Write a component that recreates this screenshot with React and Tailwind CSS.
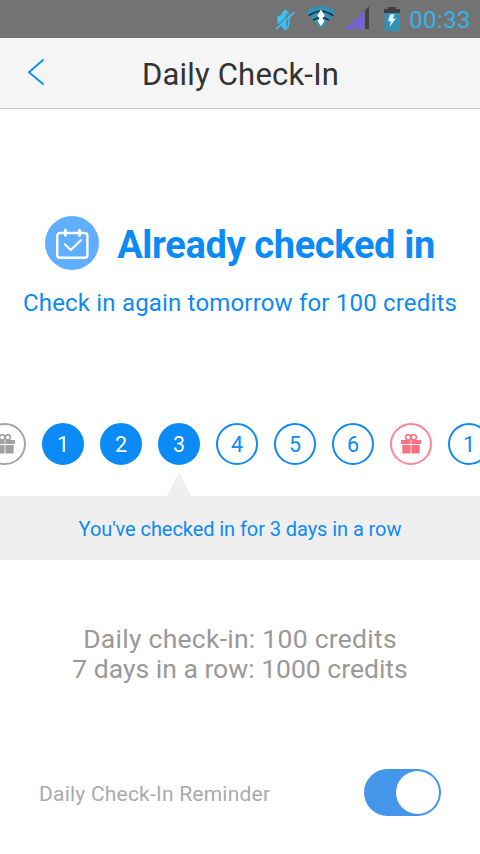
import { useState } from "react";

const days = [
  { type: "gift", state: "past" },
  { label: "1", state: "done" },
  { label: "2", state: "done" },
  { label: "3", state: "done" },
  { label: "4", state: "next" },
  { label: "5", state: "next" },
  { label: "6", state: "next" },
  { type: "gift", state: "reward" },
  { label: "1", state: "next" },
];

const dayStyles = {
  past: "border-[#a6a6a6] text-[#a0a0a0]",
  done: "border-[#0c8af5] bg-[#0c8af5] text-white",
  next: "border-[#0c8af5] text-[#0c8af5]",
  reward: "border-[#ff8591] text-[#ff7080]",
};

function App() {
  const [reminder, setReminder] = useState(true);

  return (
    <div className="flex h-[854px] w-[480px] flex-col overflow-hidden bg-white font-[Roboto,sans-serif]">
      <StatusBar />

      <header className="flex h-[71px] shrink-0 items-center border-b border-[#c6c8c8] bg-[#f5f5f5]">
        <button type="button" aria-label="Back" className="w-[72px] pb-0.5 pl-[27px]">
          <svg width="18" height="28" viewBox="0 0 18 28" fill="none" stroke="#1291f7" strokeWidth="2" strokeLinecap="round">
            <path d="M16 2 2 14.3 16 26" />
          </svg>
        </button>
        <h1 className="flex-1 pt-[3px] pr-[71px] text-center text-[31px] leading-9 tracking-[0.2px] text-[#333]">
          Daily Check-In
        </h1>
      </header>

      <section className="flex flex-col items-center pt-[107px] text-[#0c8af5]">
        <div className="flex h-[54px] items-center gap-[18px]">
          <CalendarBadge />
          <h2 className="pt-1 text-[38px] leading-[46px] font-bold tracking-[-0.35px] whitespace-nowrap">
            Already checked in
          </h2>
        </div>
        <p className="mt-[17px] text-2xl leading-8 tracking-[0.18px] whitespace-nowrap">
          Check in again tomorrow for 100 credits
        </p>
      </section>

      <section className="mt-[104px]">
        <div className="-ml-4 flex gap-4">
          {days.map((day, i) => (
            <Day key={i} {...day} />
          ))}
        </div>
        <svg className="mt-2 ml-[167px] block" width="24" height="23" viewBox="0 0 24 23" fill="#efefef">
          <path d="M0 23 10.8 1.2Q12 -.7 13.2 1.2L24 23z" />
        </svg>
        <p className="h-16 bg-[#efefef] pt-[3px] text-center text-xl leading-[60px] tracking-[-0.07px] text-[#0c8af5]">
          You've checked in for 3 days in a row
        </p>
      </section>

      <section className="mt-16 text-center text-[26.5px] leading-[30px] text-[#999]">
        <p className="tracking-[0.26px]">Daily check-in: 100 credits</p>
        <p>7 days in a row: 1000 credits</p>
      </section>

      <section className="mt-[85px] flex h-[47px] items-center justify-between pr-[39px] pl-[39px]">
        <span className="pt-0.5 text-[21px] leading-7 tracking-[0.22px] text-[#aaa]">Daily Check-In Reminder</span>
        <button
          type="button"
          role="switch"
          aria-checked={reminder}
          aria-label="Daily Check-In Reminder"
          onClick={() => setReminder((v) => !v)}
          className={`flex h-[47px] w-[77px] items-center rounded-full px-0.5 ${
            reminder ? "justify-end bg-[#4496ea]" : "justify-start bg-[#ccc]"
          }`}
        >
          <span className="size-[43px] rounded-full bg-white" />
        </button>
      </section>
    </div>
  );
}

const Day = ({ type, label, state }) => (
  <div
    className={`flex size-[42px] shrink-0 items-center justify-center rounded-full border-2 text-[21.5px] leading-none ${dayStyles[state]}`}
  >
    {type === "gift" ? <GiftIcon /> : <span className="pt-0.5">{label}</span>}
  </div>
);

const GiftIcon = () => (
  <svg className="shrink-0" width="20" height="20" viewBox="0 0 20 20" fill="currentColor">
    <path d="M0 6h9.600v4H0zM10.400 6H20v4h-9.600zM1.300 11h8.300v8.500H1.300zM10.400 11h8.300v8.500h-8.300z" />
    <circle cx="7.200" cy="3.300" r="2.600" fill="none" stroke="currentColor" strokeWidth="1.500" />
    <circle cx="12.800" cy="3.300" r="2.600" fill="none" stroke="currentColor" strokeWidth="1.500" />
  </svg>
);

const CalendarBadge = () => (
  <svg width="54" height="54" viewBox="0 0 54 54" fill="none" stroke="white" strokeWidth="2.4" strokeLinecap="round" strokeLinejoin="round">
    <circle cx="27" cy="27" r="27" fill="#60aeff" stroke="none" />
    <rect x="12.200" y="17" width="30.200" height="24.800" rx="2.800" />
    <path d="M20.400 14.200v5.300M34.500 14.200v5.300" strokeWidth="2.800" />
    <path d="m20 28.500 5.700 5.500 10.200-9.800" strokeWidth="2.200" />
  </svg>
);

const StatusBar = () => (
  <div className="flex h-[38px] shrink-0 items-center justify-end bg-[#737373] pr-[9px]">
    {/* muted speaker */}
    <svg className="mt-0.5 mr-[11px]" width="20" height="21" viewBox="0 0 20 21">
      <path d="M2.500 6H5l4.500-6h1.800v20H9.500L5 14H2.500z" fill="#33c4ff" />
      <path d="M10.500.8c3 .8 3.500 4 3.500 9.200s-.5 8.400-3.500 9.400" fill="none" stroke="#33c4ff" strokeWidth="1.500" />
      <path d="M.2 17.800 18.500 1" stroke="#737373" strokeWidth="1.300" />
      <path d="M.8 19.300 19.500 2.200" stroke="#33c4ff" strokeWidth="1.600" />
    </svg>
    {/* wifi with traffic arrows */}
    <svg className="mr-[9px] mb-[3px]" width="30" height="23" viewBox="0 0 30 23">
      <path d="M0 6Q15-6 30 6L15 23z" fill="#3390b5" />
      <path d="M2.800 9.600Q15 .8 27.200 9.600M7 14.200q8-5.500 16 0" fill="none" stroke="#142b35" strokeWidth="1.400" />
      <path d="M15 3.500 18.700 9.500l-2.200 3 2 2.500L15 20.300 11.500 15l2-2.500-2.200-3z" fill="white" />
    </svg>
    {/* signal strength, last bar empty */}
    <svg className="mr-[15px] mb-[3px]" width="24" height="23" viewBox="0 0 24 23" fill="#735cff">
      <path d="M.5 23 6 17.500V23zM8 15.500l4.300-4V23H8zM14 10l4.300-4v17H14z" />
      <path d="M20 4.200 24 .3V23h-4z" fill="#444" />
    </svg>
    <svg className="mr-[9px]" width="16" height="24" viewBox="0 0 16 24">
      <path d="M4 0h8v2h4v4H0V2h4z" fill="#404040" />
      <path d="M.5 6h15v18H.5z" fill="#3390b5" />
      <path d="m6 7.500 4.500-.5L9 11.500h3L5.500 20l1.300-5.800H4z" fill="#e3f2f8" />
    </svg>
    <span className="pt-0.5 text-2xl leading-8 tracking-[0.4px] text-[#33b5e5]">00:33</span>
  </div>
);

export default App;
